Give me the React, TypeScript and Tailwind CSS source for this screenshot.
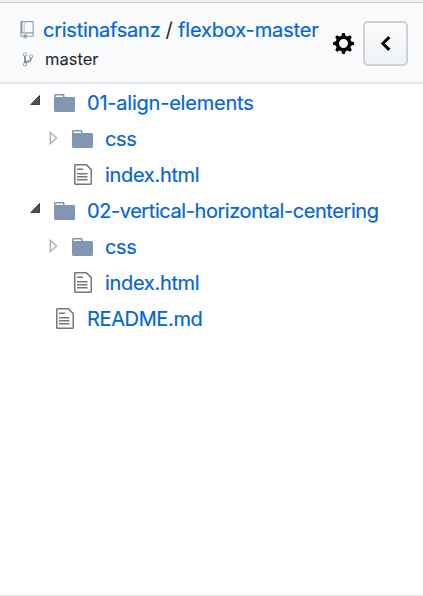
import React from "react";

const FOLDER =
  "M13 4H7V3c0-.66-.31-1-1-1H1c-.55 0-1 .45-1 1v10c0 .55.45 1 1 1h12c.55 0 1-.45 1-1V5c0-.55-.45-1-1-1zM6 4H1V3h5v1z";
const FILE =
  "M6 5H2V4h4v1zM2 8h7V7H2v1zm0 2h7V9H2v1zm0 2h7v-1H2v1zm10-7.5V14c0 .55-.45 1-1 1H1c-.55 0-1-.45-1-1V2c0-.55.45-1 1-1h7.5L12 4.5zM11 5L8 2H1v12h10V5z";
const REPO =
  "M4 9H3V8h1v1zm0-3H3v1h1V6zm0-2H3v1h1V4zm0-2H3v1h1V2zm8-1v12c0 .55-.45 1-1 1H6v2l-1.5-1.5L3 16v-2H1c-.55 0-1-.45-1-1V1c0-.55.45-1 1-1h10c.55 0 1 .45 1 1zm-1 10H1v2h2v-1h3v1h5v-2zm0-10H2v9h9V1z";
const BRANCH =
  "M10 5c0-1.11-.89-2-2-2a1.993 1.993 0 0 0-1 3.72v.3c-.02.52-.23.98-.63 1.38-.4.4-.86.61-1.38.63-.83.02-1.48.16-2 .45V4.72a1.993 1.993 0 0 0-1-3.72C.88 1 0 1.89 0 3a2 2 0 0 0 1 1.72v6.56c-.59.35-1 .99-1 1.72 0 1.11.89 2 2 2 1.11 0 2-.89 2-2 0-.53-.2-1-.53-1.36.09-.06.48-.41.59-.47.25-.11.56-.17.94-.17 1.05-.05 1.95-.45 2.75-1.25S8.95 7.77 9 6.73h-.02C9.59 6.37 10 5.73 10 5zM2 1.8c.66 0 1.2.55 1.2 1.2 0 .65-.55 1.2-1.2 1.2C1.35 4.2.8 3.65.8 3c0-.65.55-1.2 1.2-1.2zm0 12.41c-.66 0-1.2-.55-1.2-1.2 0-.65.55-1.2 1.2-1.2.65 0 1.2.55 1.2 1.2 0 .65-.55 1.2-1.2 1.2zm6-8c-.66 0-1.2-.55-1.2-1.2 0-.65.55-1.2 1.2-1.2.65 0 1.2.55 1.2 1.2 0 .65-.55 1.2-1.2 1.2z";
const GEAR =
  "M14 8.77v-1.6l-1.94-.64-.45-1.09.88-1.84-1.13-1.13-1.81.91-1.09-.45-.69-1.92h-1.6l-.63 1.94-1.11.45-1.84-.88-1.13 1.13.91 1.81-.45 1.09L0 7.23v1.59l1.94.64.45 1.09-.88 1.84 1.13 1.13 1.81-.91 1.09.45.69 1.92h1.59l.63-1.94 1.11-.45 1.84.88 1.13-1.13-.92-1.81.47-1.09L14 8.75v.02zM7 11c-1.66 0-3-1.34-3-3s1.34-3 3-3 3 1.34 3 3-1.34 3-3 3z";
const CHEVRON = "M5.5 3L7 4.5 3.25 8 7 11.5 5.5 13l-5-5 5-5z";

function Icon({ d, box, className }: { d: string; box: string; className: string }) {
  return (
    <svg viewBox={box} className={`shrink-0 fill-current ${className}`} aria-hidden="true">
      <path fillRule="evenodd" d={d} />
    </svg>
  );
}

type Row = {
  name: string;
  kind: "open" | "closed" | "file";
  nested?: boolean;
  tracking: string;
};

const rows: Row[] = [
  { name: "01-align-elements", kind: "open", tracking: "tracking-[-0.22px]" },
  { name: "css", kind: "closed", nested: true, tracking: "tracking-[-0.4px]" },
  { name: "index.html", kind: "file", nested: true, tracking: "tracking-[-0.32px]" },
  { name: "02-vertical-horizontal-centering", kind: "open", tracking: "tracking-[-0.43px]" },
  { name: "css", kind: "closed", nested: true, tracking: "tracking-[-0.4px]" },
  { name: "index.html", kind: "file", nested: true, tracking: "tracking-[-0.32px]" },
  { name: "README.md", kind: "file", tracking: "tracking-[-0.37px]" },
];

function TreeRow({ row }: { row: Row }) {
  return (
    <li className={`flex h-9 items-center ${row.nested ? "pl-[45px]" : "pl-[27px]"}`}>
      <span className="flex h-full w-[27px] shrink-0">
        {row.kind === "open" && (
          <svg viewBox="0 0 10 10" className="ml-[2.5px] mt-[10px] size-[10px]">
            <path d="M9.5 0.5V9.5H0.8z" fill="#505050" stroke="#333" strokeWidth=".9" />
          </svg>
        )}
        {row.kind === "closed" && (
          <svg viewBox="0 0 9 14" className="ml-1 mt-[10px] h-[14px] w-[9px]">
            <path d="M1.3 1.4V12.6L7.6 7z" fill="none" stroke="#b5b5b5" strokeWidth="1.5" />
          </svg>
        )}
      </span>
      <span className="flex w-[33px] shrink-0">
        {row.kind === "file" ? (
          <Icon d={FILE} box="0 1 12 14" className="mb-px ml-0.5 h-[21px] w-[18px] text-[#777]" />
        ) : (
          <Icon d={FOLDER} box="0 2 14 12" className="h-[18px] w-[21px] text-[#8096b2]" />
        )}
      </span>
      <span
        className={`whitespace-nowrap text-[20px] leading-9 text-[#0366d6] [-webkit-text-stroke:0.2px] ${row.tracking}`}
      >
        {row.name}
      </span>
    </li>
  );
}

export default function App() {
  return (
    <div className="flex h-[596px] w-[423px] flex-col overflow-hidden border-b border-[#e5e5e5] bg-white font-['Inter',sans-serif]">
      <div className="h-[3px] shrink-0 border-b border-[#d0d0d0] bg-[#f0f0f0]" />
      <header className="flex h-[81px] shrink-0 border-b-2 border-[#e1e4e8] bg-[#fafbfc] pl-5 text-[#24292e]">
        <div className="w-[313px] pt-[13px]">
          <div className="flex h-7 items-center whitespace-nowrap text-[20px] leading-7">
            <Icon d={REPO} box="0 0 12 16" className="h-[18px] w-[14px] text-[#959da5]" />
            <span className="ml-[9px] tracking-[-0.25px] text-[#0366d6] [-webkit-text-stroke:0.2px]">cristinafsanz</span>
            <span className="w-[17.5px] text-center">/</span>
            <span className="tracking-[-0.14px] text-[#0366d6] [-webkit-text-stroke:0.2px]">flexbox-master</span>
          </div>
          <div className="flex h-[30px] items-center text-[16.5px]">
            <Icon d={BRANCH} box="0 1 10 14" className="ml-[3px] h-[15px] w-[10px] text-[#8a939c]" />
            <span className="ml-3 [-webkit-text-stroke:0.1px]">master</span>
          </div>
        </div>
        <Icon d={GEAR} box="0 1 14 14" className="mt-[30px] size-[21px] text-black" />
        <button className="ml-[9px] mt-[18px] flex size-[45px] items-center justify-center rounded-[5px] border-2 border-[#cdd0d4] bg-gradient-to-b from-[#fafbfc] to-[#eff3f6] text-black">
          <Icon d={CHEVRON} box="0 3 8 10" className="ml-px h-[15px] w-[12px]" />
        </button>
      </header>
      <ul className="mt-px">
        {rows.map((row, i) => (
          <TreeRow key={i} row={row} />
        ))}
      </ul>
    </div>
  );
}
